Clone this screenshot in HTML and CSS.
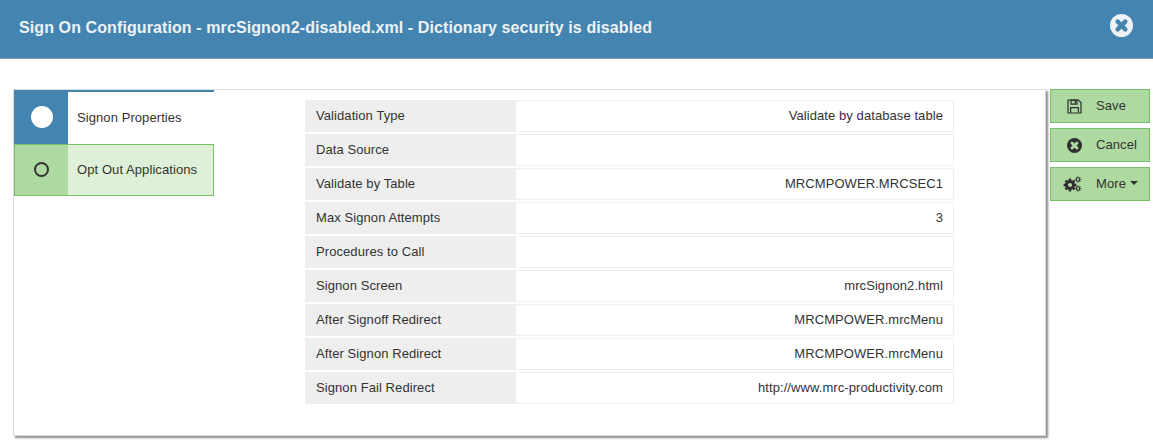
FILE: index.html
```html
<!DOCTYPE html>
<html lang="en">
<head>
<meta charset="utf-8">
<title>Sign On Configuration</title>
<link rel="stylesheet" href="styles.css">
</head>
<body>
<header class="title-bar">
  <h1 class="title">Sign On Configuration - mrcSignon2-disabled.xml - Dictionary security is disabled</h1>
  <svg class="close-icon" viewBox="0 0 24 24" aria-label="Close"><circle cx="12" cy="12" r="12" fill="#eef2f5"/><path d="M8 8l8 8M16 8l-8 8" fill="none" stroke="#4484b0" stroke-width="4.6" stroke-linecap="round"/></svg>
</header>
<main class="workspace">
  <section class="panel">
    <nav class="tabs">
      <div class="tab tab-active">
        <span class="tab-mark"><span class="dot-solid"></span></span>
        <span class="tab-label">Signon Properties</span>
      </div>
      <div class="tab tab-idle">
        <span class="tab-mark"><span class="dot-ring"></span></span>
        <span class="tab-label">Opt Out Applications</span>
      </div>
    </nav>
    <div class="props">
      <div class="row"><div class="key">Validation Type</div><div class="val">Validate by database table</div></div>
      <div class="row"><div class="key">Data Source</div><div class="val"></div></div>
      <div class="row"><div class="key">Validate by Table</div><div class="val">MRCMPOWER.MRCSEC1</div></div>
      <div class="row"><div class="key">Max Signon Attempts</div><div class="val">3</div></div>
      <div class="row"><div class="key">Procedures to Call</div><div class="val"></div></div>
      <div class="row"><div class="key">Signon Screen</div><div class="val">mrcSignon2.html</div></div>
      <div class="row"><div class="key">After Signoff Redirect</div><div class="val">MRCMPOWER.mrcMenu</div></div>
      <div class="row"><div class="key">After Signon Redirect</div><div class="val">MRCMPOWER.mrcMenu</div></div>
      <div class="row"><div class="key">Signon Fail Redirect</div><div class="val">http://www.mrc-productivity.com</div></div>
    </div>
  </section>
  <aside class="actions">
    <button class="action" type="button">
      <span class="action-icon"><svg width="15" height="15" viewBox="0 0 15 15"><path d="M1 1h10.5L14 3.5V14H1z" fill="none" stroke="#2f2f2f" stroke-width="1.2"/><path d="M4 1.2h6v4H4z" fill="none" stroke="#2f2f2f" stroke-width="1.2"/><rect x="7.6" y="2" width="1.4" height="2.4" fill="#2f2f2f"/><path d="M3.6 13.8V8.6h7.8v5.2" fill="none" stroke="#2f2f2f" stroke-width="1.2"/></svg></span>
      <span class="action-text">Save</span>
    </button>
    <button class="action" type="button">
      <span class="action-icon"><svg width="15" height="15" viewBox="0 0 24 24"><circle cx="12" cy="12" r="12" fill="#2f2f2f"/><path d="M8 8l8 8M16 8l-8 8" fill="none" stroke="#aed9a0" stroke-width="4.6" stroke-linecap="round"/></svg></span>
      <span class="action-text">Cancel</span>
    </button>
    <button class="action" type="button">
      <span class="action-icon action-icon-wide"><svg width="19" height="16" viewBox="0 0 19 16"><g fill="none" stroke="#2f2f2f"><circle cx="7" cy="9" r="3.6" stroke-width="3"/><path d="M7 2.6v2M7 13.4v2M.6 9h2M11.4 9h2M2.5 4.5l1.4 1.4M10.1 12.1l1.4 1.4M2.5 13.5l1.4-1.4M10.1 5.9l1.4-1.4" stroke-width="2.4"/><circle cx="15" cy="3.5" r="1.7" stroke-width="1.1"/><path d="M15 .3v1M15 5.7v1M11.8 3.5h1M17.2 3.5h1M12.8 1.3l.7.7M16.5 5l.7.7M12.8 5.7l.7-.7M16.5 2l.7-.7" stroke-width="1"/><circle cx="15" cy="12.5" r="1.7" stroke-width="1.1"/><path d="M15 9.3v1M15 14.7v1M11.8 12.5h1M17.2 12.5h1M12.8 10.3l.7.7M16.5 14l.7.7M12.8 14.7l.7-.7M16.5 11l.7-.7" stroke-width="1"/></g></svg></span>
      <span class="action-text">More<span class="caret"></span></span>
    </button>
  </aside>
</main>
</body>
</html>
```
FILE: styles.css
```css
* { box-sizing: border-box; }
html, body { margin: 0; padding: 0; }
body {
  background: #fff;
  color: #333;
  font-family: "Liberation Sans", Arial, sans-serif;
  font-size: 13px;
  letter-spacing: 0.08px;
}
.title-bar {
  height: 59px;
  background: #4484b0;
  border-bottom: 1px solid #8a9aa5;
  display: flex;
  align-items: center;
  justify-content: space-between;
  padding: 0 20px 2px 19px;
}
.title {
  margin: 0;
  color: #eef2f5;
  font-size: 16px;
  font-weight: bold;
  letter-spacing: 0.1px;
}
.close-icon { width: 23px; height: 23px; margin-bottom: 5px; }
.workspace {
  display: flex;
  align-items: flex-start;
  padding: 30px 0 10px 13px;
  gap: 4px;
}
.panel {
  width: 1033px;
  height: 347px;
  display: flex;
  align-items: flex-start;
  background: #fff;
  border: 1px solid #ddd;
  box-shadow: 2px 2px 2px #8c8c8c;
}
.tabs { width: 200px; flex: none; display: flex; flex-direction: column; }
.tab { display: flex; align-items: stretch; }
.tab-active { height: 54px; border-top: 2px solid #4484b0; }
.tab-idle { height: 52px; background: #dff0d8; border: 1px solid #77c268; }
.tab-mark { width: 54px; flex: none; display: flex; align-items: center; justify-content: center; }
.tab-active .tab-mark { background: #4484b0; padding: 0 0 3px 2px; }
.tab-idle .tab-mark { background: #aed9a0; width: 53px; padding-bottom: 1px; }
.dot-solid { width: 22px; height: 22px; border-radius: 50%; background: #fff; }
.dot-ring { width: 15px; height: 15px; border-radius: 50%; border: 2px solid #333; }
.tab-label { display: flex; align-items: center; padding-left: 9px; }
.tab-active .tab-label { padding-bottom: 2px; }
.tab-idle .tab-label { padding-bottom: 1px; }
.props {
  margin: 10px 0 0 91px;
  width: 649px;
  display: flex;
  flex-direction: column;
  gap: 2px;
}
.row {
  height: 32px;
  display: flex;
  border: 1px solid #eee;
}
.key {
  width: 210px;
  flex: none;
  background: #eee;
  padding: 0 10px;
  line-height: 30px;
}
.val {
  flex: 1;
  text-align: right;
  padding: 0 10px;
  line-height: 30px;
}
.actions { display: flex; flex-direction: column; gap: 5px; }
.action {
  width: 100px;
  height: 34px;
  display: flex;
  align-items: center;
  padding: 0;
  background: #aed9a0;
  border: 1px solid #77c268;
  color: #333;
  font: inherit;
  letter-spacing: inherit;
}
.action-icon { width: 45px; flex: none; display: flex; justify-content: center; padding-left: 1px; }
.action-icon-wide { padding-right: 2px; padding-left: 0; }
.action-text { display: inline-flex; align-items: center; padding-bottom: 2px; }
.caret {
  margin-left: 4px;
  border-top: 4px solid #333;
  border-left: 4px solid transparent;
  border-right: 4px solid transparent;
}
```
